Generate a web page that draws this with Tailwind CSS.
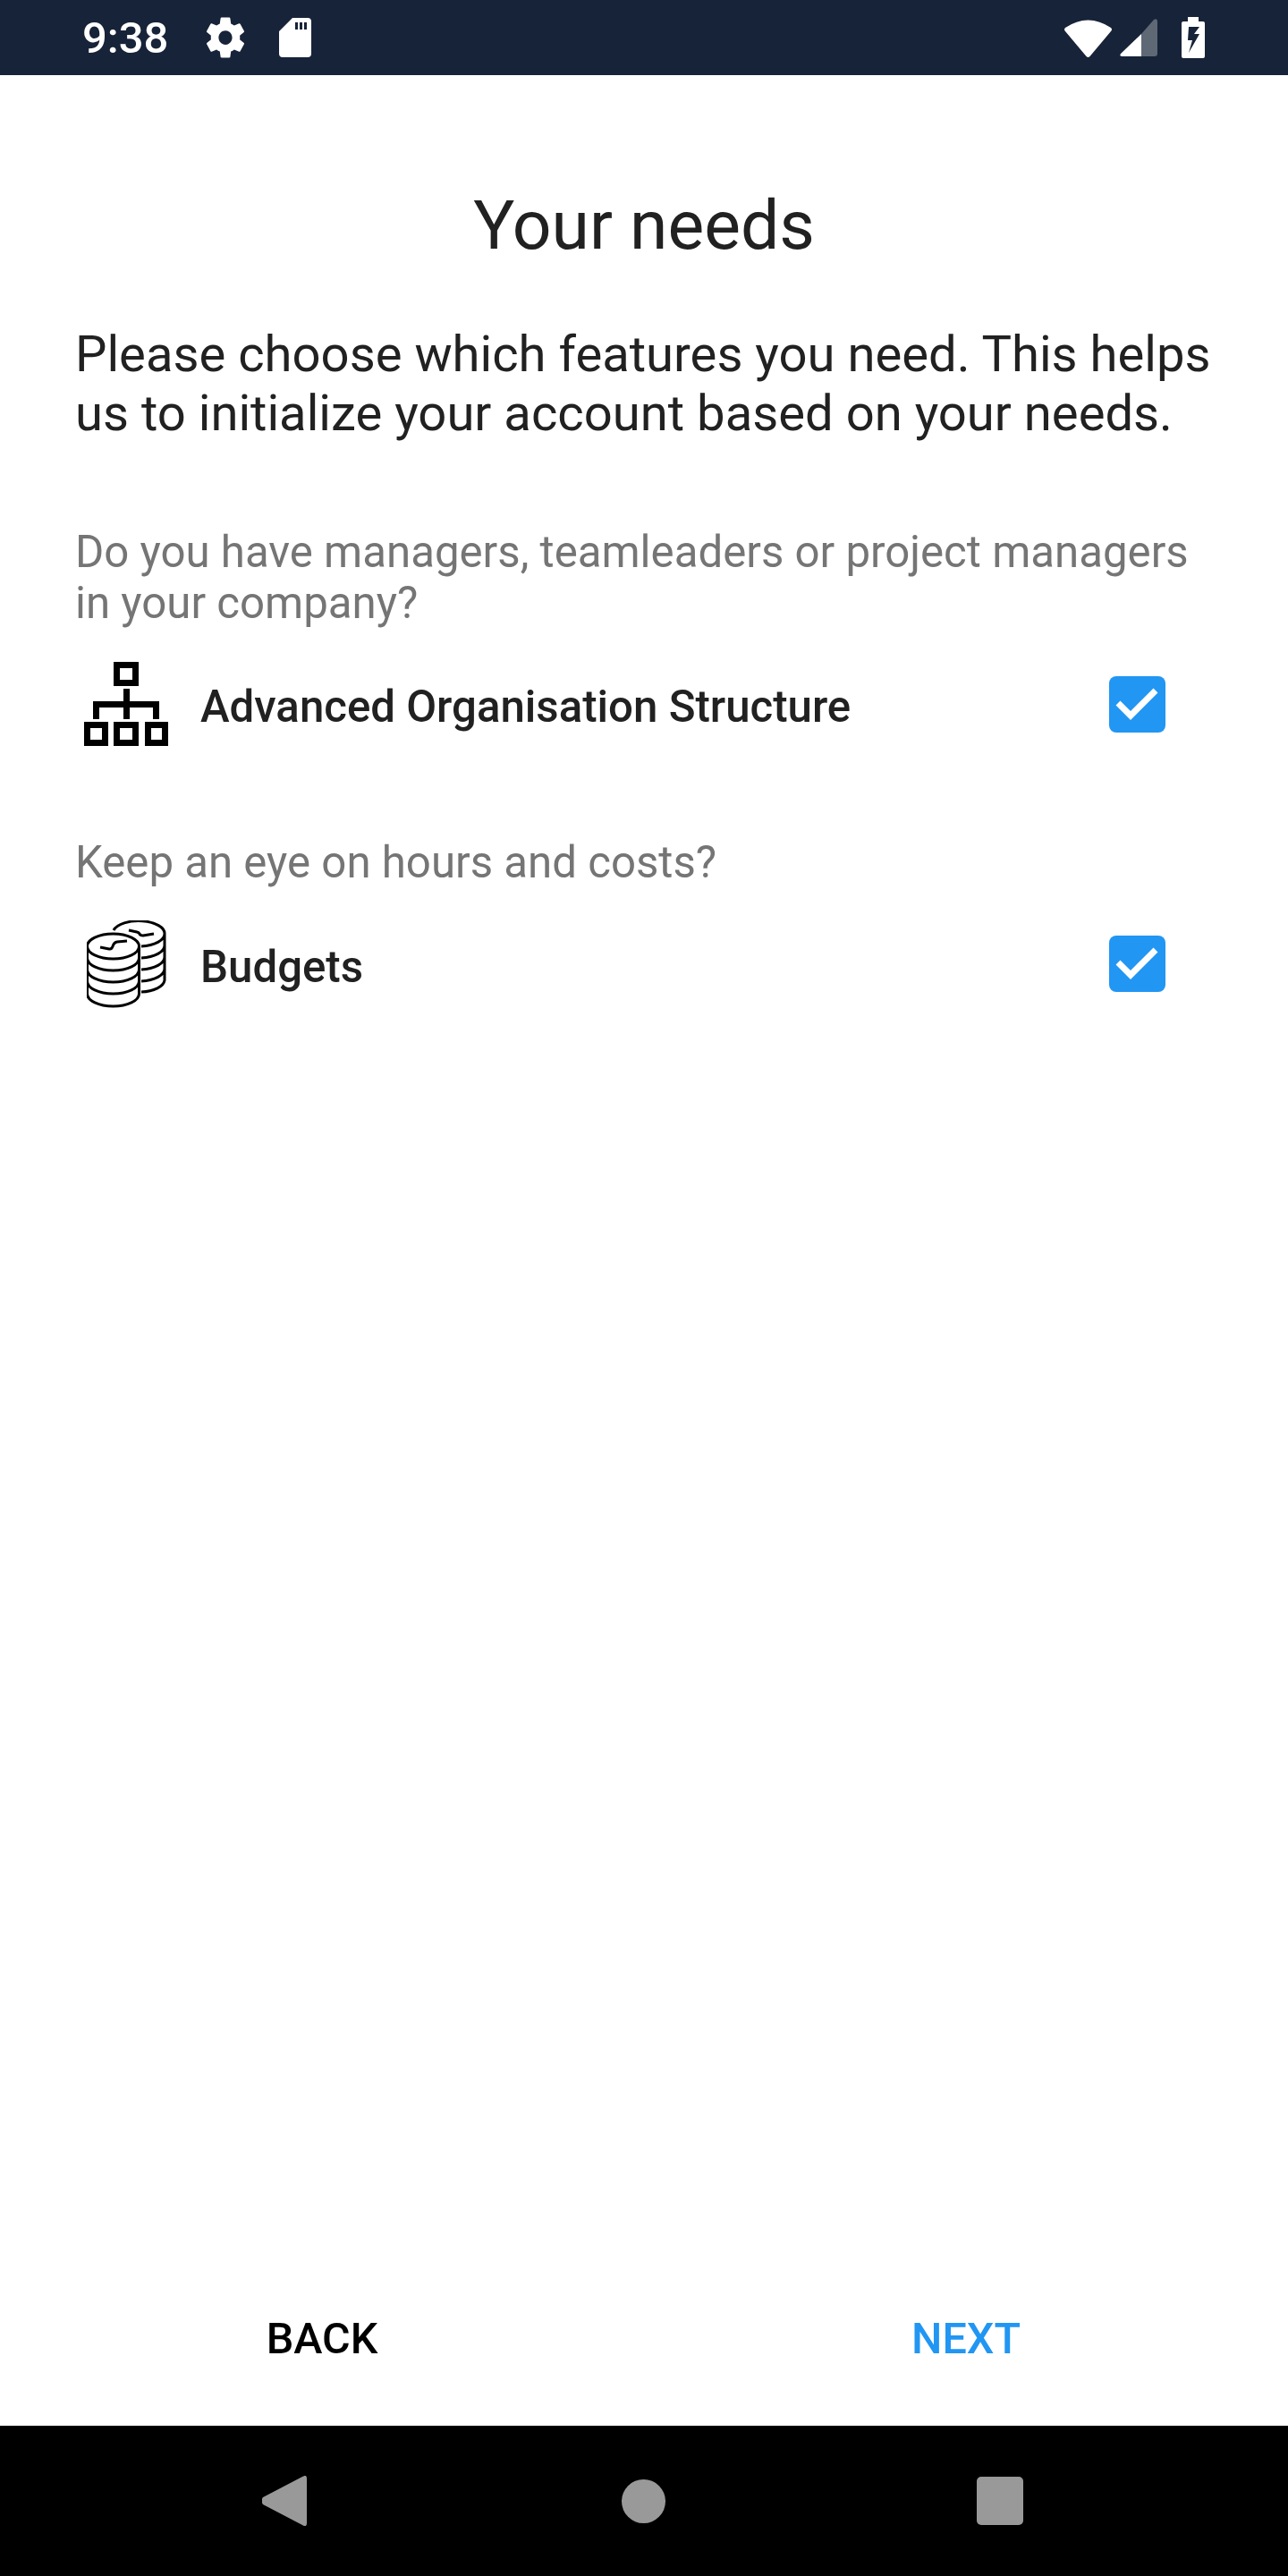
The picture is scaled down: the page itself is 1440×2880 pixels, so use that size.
<!DOCTYPE html>
<html lang="en">
<head>
  <meta charset="UTF-8">
  <title>Your needs</title>
  <script src="https://cdn.jsdelivr.net/npm/@tailwindcss/browser@4"></script>
</head>
<body class="bg-white font-['Roboto',sans-serif]">
  <div class="w-[1440px] h-[2880px] flex flex-col">
    <!-- status bar -->
    <div class="h-[84px] bg-[#172338] flex items-center text-white shrink-0">
      <span class="ml-[92px] text-[49px] leading-none font-medium">9:38</span>
      <svg class="ml-[38px] w-[52px] h-[54px]" viewBox="0 0 24 24" preserveAspectRatio="none" fill="#fff"><path d="M19.43 12.98c.04-.32.07-.64.07-.98s-.03-.66-.07-.98l2.11-1.65c.19-.15.24-.42.12-.64l-2-3.46c-.12-.22-.39-.3-.61-.22l-2.49 1c-.52-.4-1.08-.73-1.69-.98l-.38-2.65C14.46 2.18 14.25 2 14 2h-4c-.25 0-.46.18-.49.42l-.38 2.65c-.61.25-1.17.59-1.69.98l-2.49-1c-.23-.09-.49 0-.61.22l-2 3.46c-.13.22-.07.49.12.64l2.11 1.65c-.04.32-.07.65-.07.98s.03.66.07.98l-2.11 1.65c-.19.15-.24.42-.12.64l2 3.46c.12.22.39.3.61.22l2.49-1c.52.4 1.08.73 1.69.98l.38 2.65c.03.24.24.42.49.42h4c.25 0 .46-.18.49-.42l.38-2.65c.61-.25 1.17-.59 1.69-.98l2.49 1c.23.09.49 0 .61-.22l2-3.46c.12-.22.07-.49-.12-.64l-2.11-1.65zM12 15.5c-1.93 0-3.5-1.57-3.5-3.5s1.57-3.5 3.5-3.5 3.5 1.57 3.5 3.5-1.57 3.5-3.5 3.5z"/></svg>
      <svg class="ml-[34px] w-[36px] h-[44px]" viewBox="0 0 36 44" fill="#fff"><path fill-rule="evenodd" d="M15 0H32a4 4 0 0 1 4 4V40a4 4 0 0 1-4 4H4a4 4 0 0 1-4-4V15zM18 5V13H21V5zM23 5V13H26V5zM28 5V13H31V5z"/></svg>
      <div class="ml-auto flex items-center">
        <svg class="w-[53px] h-[43px]" viewBox="0 0 53 43" fill="#fff"><path d="M1 10Q26.500-7 52 10Q54 12 52 14L28.500 42Q26.500 44 24.500 42L1 14Q-1 12 1 10z"/></svg>
        <svg class="ml-[9px] w-[42px] h-[42px]" viewBox="0 0 42 42"><path fill="#5f6875" d="M24 17L38 1Q42-1 42 3V39Q42 42 39 42H24z"/><path fill="#fff" d="M24 17V42H3Q-1 42 1 39z"/></svg>
        <svg class="ml-[27px] mr-[93px] w-[26px] h-[46px]" viewBox="0 0 26 46" fill="#fff"><path fill-rule="evenodd" d="M7 0H19V5H24a2 2 0 0 1 2 2V44a2 2 0 0 1-2 2H2a2 2 0 0 1-2-2V7a2 2 0 0 1 2-2H7zM8 11L7 26H12L8 40L20 19H14L20 11z"/></svg>
      </div>
    </div>

    <!-- content -->
    <div class="flex-1 flex flex-col px-[84px]">
      <h1 class="mt-[130px] text-center text-[76.800px] leading-[76px] text-[#212121]">Your needs</h1>
      <p class="mt-[73px] text-[56.200px] leading-[66px] text-[#212121] whitespace-nowrap">Please choose which features you need. This helps<br>us to initialize your account based on your needs.</p>

      <p class="mt-[94px] text-[49.200px] leading-[57px] text-[#757575] whitespace-nowrap">Do you have managers, teamleaders or project managers<br>in your company?</p>
      <div class="mt-[39px] h-[90px] flex items-center">
        <svg class="ml-[10px] w-[95px] h-[95px] shrink-0" viewBox="24 20 95 95" fill="none" stroke="#000" stroke-width="7">
          <rect x="60.500" y="23.500" width="21" height="20"/>
          <rect x="27.500" y="90.500" width="20" height="20"/>
          <rect x="60.500" y="90.500" width="21" height="20"/>
          <rect x="95.500" y="90.500" width="19" height="20"/>
          <path d="M71.500 50V84M37.500 84V67.500H104.500V84"/>
        </svg>
        <span class="ml-[35px] pt-[8px] text-[49.200px] font-medium text-[#212121]">Advanced Organisation Structure</span>
        <span class="ml-auto mr-[53px] w-[63px] h-[63px] rounded-[8px] bg-[#2196f3] flex items-center justify-center">
          <svg class="w-[63px] h-[63px]" viewBox="0 0 63 63" fill="none" stroke="#fff" stroke-width="7"><path d="M10 30L24 44L52 16"/></svg>
        </span>
      </div>

      <p class="mt-[104px] text-[49.200px] leading-[57px] text-[#757575]">Keep an eye on hours and costs?</p>
      <div class="mt-[34px] h-[100px] flex items-center">
        <svg class="ml-[13px] mt-[4px] w-[92px] h-[100px] shrink-0" viewBox="27 20 92 100" fill="none" stroke="#000" stroke-width="3">
          <ellipse cx="56.500" cy="49" rx="29" ry="14"/>
          <path d="M27.500 49V102A29 14 0 0 0 85.500 102V49M27.500 62A29 14 0 0 0 85.500 62M27.500 75A29 14 0 0 0 85.500 75M27.500 88A29 14 0 0 0 85.500 88"/>
          <path d="M57 31A29 14 0 0 1 114 35A29 14 0 0 1 88 49M114 35V87A29 14 0 0 1 88 100M114 48A29 14 0 0 1 88 62M114 61A29 14 0 0 1 88 75M114 74A29 14 0 0 1 88 88"/>
          <path d="M42 50L52 52C58 53 54 45 61 44L72 43"/>
          <path d="M74 31L83 33C88 34 84 37 90 37L102 35"/>
        </svg>
        <span class="ml-[35px] pt-[10px] text-[49.200px] font-medium text-[#212121]">Budgets</span>
        <span class="ml-auto mr-[53px] w-[63px] h-[63px] rounded-[8px] bg-[#2196f3] flex items-center justify-center">
          <svg class="w-[63px] h-[63px]" viewBox="0 0 63 63" fill="none" stroke="#fff" stroke-width="7"><path d="M10 30L24 44L52 16"/></svg>
        </span>
      </div>

      <div class="mt-auto h-[96px] mb-[49px] flex items-center text-[48.500px] font-medium -mx-[84px]">
        <button class="w-[720px] text-center text-black">BACK</button>
        <button class="w-[720px] text-center text-[#2196f3]">NEXT</button>
      </div>
    </div>

    <!-- nav bar -->
    <div class="h-[168px] bg-black shrink-0 flex items-center">
      <svg class="ml-[293px] w-[50px] h-[56px]" viewBox="0 0 50 56" fill="#999"><path d="M1 24L45 1Q50-2 50 3V53Q50 58 45 55L1 32Q-2 28 1 24z"/></svg>
      <span class="ml-[352px] w-[49px] h-[49px] rounded-full bg-[#999]"></span>
      <span class="ml-[348px] w-[52px] h-[54px] rounded-[5px] bg-[#999]"></span>
    </div>
  </div>
</body>
</html>
